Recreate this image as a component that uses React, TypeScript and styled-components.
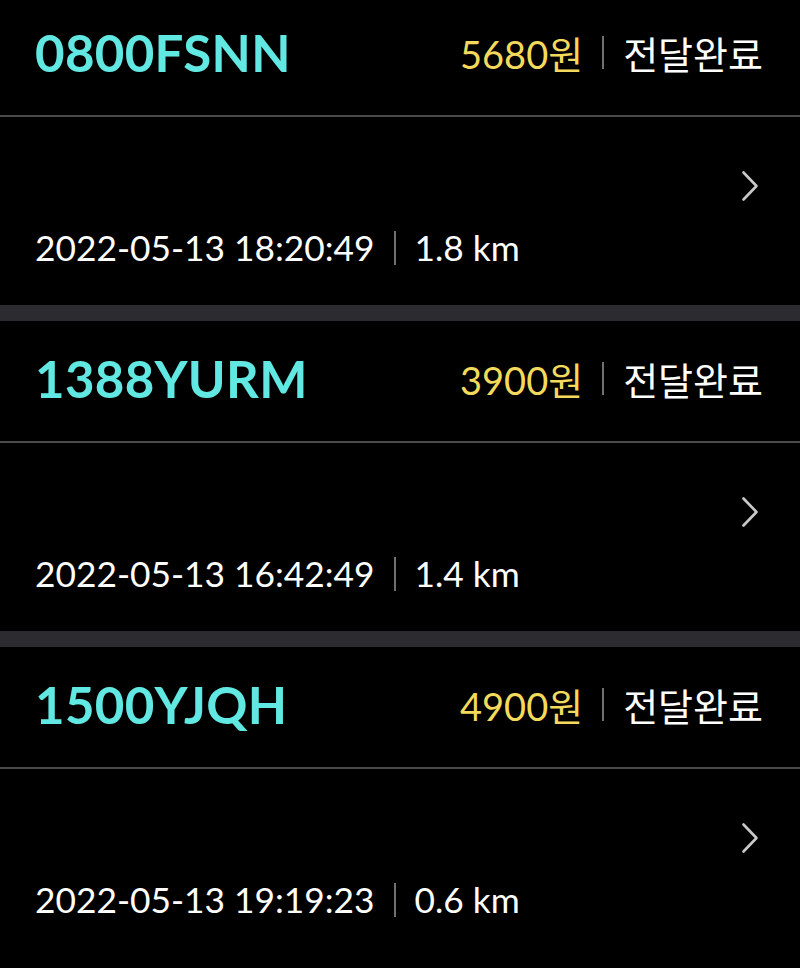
import React from 'react';
import styled, { createGlobalStyle } from 'styled-components';

interface Delivery {
  code: string;
  price: number;
  status: string;
  time: string;
  distance: string;
}

const deliveries: Delivery[] = [
  { code: '0800FSNN', price: 5680, status: '전달완료', time: '2022-05-13 18:20:49', distance: '1.8 km' },
  { code: '1388YURM', price: 3900, status: '전달완료', time: '2022-05-13 16:42:49', distance: '1.4 km' },
  { code: '1500YJQH', price: 4900, status: '전달완료', time: '2022-05-13 19:19:23', distance: '0.6 km' },
];

const GlobalStyle = createGlobalStyle`
  html, body {
    margin: 0;
    background: #000;
  }
  body {
    font-family: Lato, "Noto Sans CJK KR", sans-serif;
    color: #fff;
    overflow: hidden;
  }
`;

const Chevron = () => (
  <svg width="18" height="32" viewBox="0 0 18 32" fill="none">
    <path d="M2.5 2.5 L15.5 16 L2.5 29.5" stroke="#c9c9c9" strokeWidth="2.6" strokeLinecap="round" strokeLinejoin="round" />
  </svg>
);

const DeliveryCard = ({ code, price, status, time, distance }: Delivery) => (
  <Card>
    <Header>
      <Code>{code}</Code>
      <Summary>
        <Price>{price}원</Price>
        <Divider $height={33} />
        <Status>{status}</Status>
      </Summary>
    </Header>
    <Body>
      <ChevronRow>
        <Chevron />
      </ChevronRow>
      <Meta>
        <span>{time}</span>
        <Divider $height={34} />
        <span>{distance}</span>
      </Meta>
    </Body>
  </Card>
);

const App = () => (
  <>
    <GlobalStyle />
    <List>
      {deliveries.map((d) => (
        <DeliveryCard key={d.code} {...d} />
      ))}
    </List>
  </>
);

const List = styled.main`
  display: flex;
  flex-direction: column;
  gap: 16px;
  margin-top: -5px;
  background: #2b2b30;
`;

const Card = styled.article`
  background: #000;
  display: flex;
  flex-direction: column;
`;

const Header = styled.header`
  height: 122px;
  display: flex;
  align-items: center;
  justify-content: space-between;
  padding: 0 37px 6px 35px;
  box-sizing: border-box;
  border-bottom: 2px solid #4a4a4a;
`;

const Code = styled.h2`
  margin: 0;
  font-family: Lato, sans-serif;
  font-weight: 700;
  font-size: 51px;
  letter-spacing: 0.3px;
  color: #62e8e2;
`;

const Summary = styled.div`
  display: flex;
  align-items: center;
`;

const Price = styled.span`
  font-family: Lato, "Noto Sans CJK KR", sans-serif;
  font-size: 38px;
  color: #f4da5c;
`;

const Divider = styled.span<{ $height: number }>`
  width: 2px;
  height: ${(p) => p.$height}px;
  background: #707070;
  margin: 0 19px;
`;

const Status = styled.span`
  font-family: "Noto Sans CJK KR", sans-serif;
  font-size: 38px;
  color: #fff;
`;

const Body = styled.div`
  height: 188px;
  display: flex;
  flex-direction: column;
  justify-content: space-between;
  padding: 53px 37px 36px 35px;
  box-sizing: border-box;
`;

const ChevronRow = styled.div`
  display: flex;
  justify-content: flex-end;
  padding-right: 4px;
`;

const Meta = styled.div`
  display: flex;
  align-items: center;
  font-size: 35.3px;
  line-height: 42px;
  color: #fff;
`;

export default App;
